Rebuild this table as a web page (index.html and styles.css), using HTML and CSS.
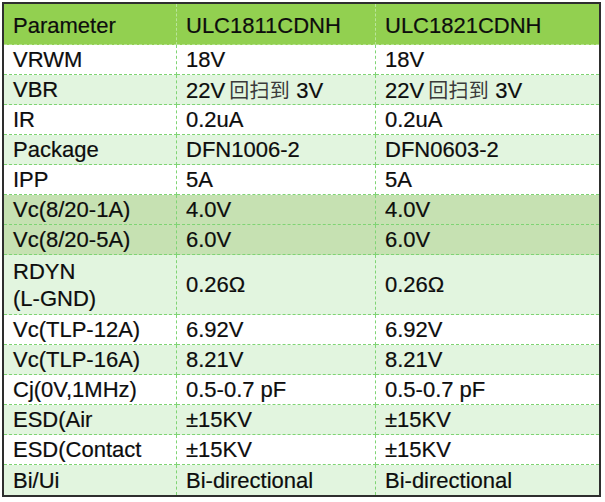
FILE: index.html
```html
<!DOCTYPE html>
<html lang="zh-CN">
<head>
<meta charset="utf-8">
<title>ULC1811CDNH / ULC1821CDNH</title>
<link rel="stylesheet" href="styles.css">
</head>
<body>
<div class="spec" role="table">
  <div class="row head" role="row"><div class="cell"><span>Parameter</span></div><div class="cell"><span>ULC1811CDNH</span></div><div class="cell"><span>ULC1821CDNH</span></div></div>
  <div class="row" role="row"><div class="cell"><span>VRWM</span></div><div class="cell"><span>18V</span></div><div class="cell"><span>18V</span></div></div>
  <div class="row light" role="row"><div class="cell"><span>VBR</span></div><div class="cell"><span>22V<span class="cjk">回扫到</span> 3V</span></div><div class="cell"><span>22V<span class="cjk">回扫到</span> 3V</span></div></div>
  <div class="row" role="row"><div class="cell"><span>IR</span></div><div class="cell"><span>0.2uA</span></div><div class="cell"><span>0.2uA</span></div></div>
  <div class="row light" role="row"><div class="cell"><span>Package</span></div><div class="cell"><span>DFN1006-2</span></div><div class="cell"><span>DFN0603-2</span></div></div>
  <div class="row" role="row"><div class="cell"><span>IPP</span></div><div class="cell"><span>5A</span></div><div class="cell"><span>5A</span></div></div>
  <div class="row mid" role="row"><div class="cell"><span>Vc(8/20-1A)</span></div><div class="cell"><span>4.0V</span></div><div class="cell"><span>4.0V</span></div></div>
  <div class="row mid" role="row"><div class="cell"><span>Vc(8/20-5A)</span></div><div class="cell"><span>6.0V</span></div><div class="cell"><span>6.0V</span></div></div>
  <div class="row light" role="row"><div class="cell"><span>RDYN<br>(L-GND)</span></div><div class="cell"><span>0.26Ω</span></div><div class="cell"><span>0.26Ω</span></div></div>
  <div class="row" role="row"><div class="cell"><span>Vc(TLP-12A)</span></div><div class="cell"><span>6.92V</span></div><div class="cell"><span>6.92V</span></div></div>
  <div class="row light" role="row"><div class="cell"><span>Vc(TLP-16A)</span></div><div class="cell"><span>8.21V</span></div><div class="cell"><span>8.21V</span></div></div>
  <div class="row" role="row"><div class="cell"><span>Cj(0V,1MHz)</span></div><div class="cell"><span>0.5-0.7 pF</span></div><div class="cell"><span>0.5-0.7 pF</span></div></div>
  <div class="row light" role="row"><div class="cell"><span>ESD(Air</span></div><div class="cell"><span>±15KV</span></div><div class="cell"><span>±15KV</span></div></div>
  <div class="row" role="row"><div class="cell"><span>ESD(Contact</span></div><div class="cell"><span>±15KV</span></div><div class="cell"><span>±15KV</span></div></div>
  <div class="row light last" role="row"><div class="cell"><span>Bi/Ui</span></div><div class="cell"><span>Bi-directional</span></div><div class="cell"><span>Bi-directional</span></div></div>
</div>
</body>
</html>
```
FILE: styles.css
```css
html, body {
  margin: 0;
  padding: 0;
  background: #ffffff;
}

body {
  padding: 2px;
  font-family: "Liberation Sans", Arial, "Noto Sans CJK SC", sans-serif;
  font-size: 22px;
  color: #0d0d0d;
  -webkit-text-stroke: 0.2px #0d0d0d;
}

.spec {
  display: grid;
  grid-template-columns: 173px 199px 223px;
  grid-template-rows: 41px repeat(7, 30px) 60px repeat(6, 30px);
  width: max-content;
  border: 2px solid #2e2e2e;
  background: #ffffff;
}

.row {
  display: contents;
}

.cell {
  display: flex;
  align-items: center;
  padding-left: 9px;
  border-right: 1px dashed #7fd474;
  border-bottom: 1px dashed #7fd474;
  line-height: 27px;
  white-space: nowrap;
  box-sizing: border-box;
}

.cell:last-child {
  border-right: none;
}

.row.last > .cell {
  border-bottom: none;
}

.head > .cell {
  background: #92d050;
  padding-top: 3px;
  border-bottom-color: #b5e38f;
  border-right-color: #b9e59a;
}

.light > .cell {
  background: #e2f5df;
}

.mid > .cell {
  background: #c6e1b2;
}

.cjk {
  font-family: "Noto Sans CJK SC", sans-serif;
  font-size: 20px;
  color: #3a3a3a;
  -webkit-text-stroke: 0;
  letter-spacing: 0.3px;
  margin-left: 4px;
}
```
